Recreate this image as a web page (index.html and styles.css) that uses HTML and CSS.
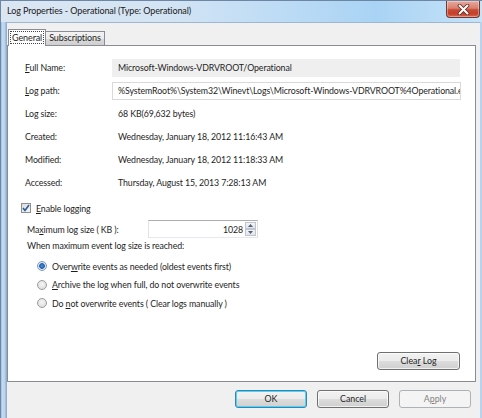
FILE: index.html
```html
<!DOCTYPE html>
<html>
<head>
<meta charset="utf-8">
<link rel="stylesheet" href="styles.css">
</head>
<body>
<div class="window">
  <header class="titlebar">
    <span class="title">Log Properties - Operational (Type: Operational)</span>
    <span class="close">
      <svg width="13" height="11" viewBox="0 0 13 11">
        <path d="M2.5 1.5 L10.5 9.5 M10.5 1.5 L2.5 9.5" stroke="#5a2a24" stroke-width="3.6" stroke-linecap="round"/>
        <path d="M2.5 1.5 L10.5 9.5 M10.5 1.5 L2.5 9.5" stroke="#ffffff" stroke-width="2" stroke-linecap="round"/>
      </svg>
    </span>
  </header>
  <div class="client">
    <div class="tabs">
      <div class="tab active"><span class="focus">General</span></div>
      <div class="tab">Subscriptions</div>
    </div>
    <section class="panel">
      <div class="props">
        <div class="lbl"><u>F</u>ull Name:</div>
        <div class="val ro">Microsoft-Windows-VDRVROOT/Operational</div>
        <div class="lbl"><u>L</u>og path:</div>
        <div class="val box">%SystemRoot%\System32\Winevt\Logs\Microsoft-Windows-VDRVROOT%4Operational.evtx</div>
        <div class="lbl">Log size:</div>
        <div class="val">68 KB(69,632 bytes)</div>
        <div class="lbl">Created:</div>
        <div class="val">Wednesday, January 18, 2012 11:16:43 AM</div>
        <div class="lbl">Modified:</div>
        <div class="val">Wednesday, January 18, 2012 11:18:33 AM</div>
        <div class="lbl">Accessed:</div>
        <div class="val">Thursday, August 15, 2013 7:28:13 AM</div>
      </div>

      <div class="check-row">
        <span class="checkbox">
          <svg width="8" height="8" viewBox="0 0 8 8"><path d="M1 4 L3 6.5 L7 1" fill="none" stroke="#2b5d99" stroke-width="1.6"/></svg>
        </span>
        <span><u>E</u>nable logging</span>
      </div>

      <div class="size-row">
        <span class="size-label">Ma<u>x</u>imum log size ( KB ):</span>
        <span class="spin">
          <span class="spin-val">1028</span>
          <span class="spin-btns">
            <span class="spin-btn"><svg width="5" height="3" viewBox="0 0 5 3"><path d="M0 3 L2.5 0 L5 3Z" fill="#4d6185"/></svg></span>
            <span class="spin-btn"><svg width="5" height="3" viewBox="0 0 5 3"><path d="M0 0 L2.5 3 L5 0Z" fill="#4d6185"/></svg></span>
          </span>
        </span>
      </div>

      <div class="when">When maximum event log size is reached:</div>

      <div class="radios">
        <div class="radio-row"><span class="radio on"></span><span>Over<u>w</u>rite events as needed (oldest events first)</span></div>
        <div class="radio-row"><span class="radio"></span><span><u>A</u>rchive the log when full, do not overwrite events</span></div>
        <div class="radio-row"><span class="radio"></span><span>Do <u>n</u>ot overwrite events ( Clear logs manually )</span></div>
      </div>

      <div class="clear-row">
        <button class="btn clear">Clea<u>r</u> Log</button>
      </div>
    </section>
    <div class="footer">
      <button class="btn default">OK</button>
      <button class="btn">Cancel</button>
      <button class="btn disabled">A<u>p</u>ply</button>
    </div>
  </div>
</div>
</body>
</html>
```

FILE: styles.css
```css
* { box-sizing: border-box; }
html, body { margin: 0; padding: 0; }
body {
  width: 482px;
  height: 418px;
  overflow: hidden;
  font-family: "Lato", "Noto Sans", sans-serif;
  font-size: 8.8px;
  letter-spacing: -0.1px;
  color: #1e1e1e;
}
u { text-decoration-thickness: 1px; text-underline-offset: 1px; }

.window {
  width: 482px;
  height: 418px;
  display: flex;
  flex-direction: column;
  background: linear-gradient(90deg, #8fb2d6 0px, #c4dcf2 1px, #b7d3ee 4px, #8eaed0 5px, #b7d3ee 6px);
  border-top: 1px solid #6c86a4;
  border-left: 1px solid #6c86a4;
}

.titlebar {
  height: 21px;
  flex: none;
  display: flex;
  align-items: flex-start;
  padding-left: 6px;
  background: linear-gradient(90deg, #dbe6f2 0%, #d3e4f4 35%, #b9daf5 62%, #a9d3f4 78%, #c6e3f8 100%);
}
.title {
  margin-top: 4px;
  font-size: 9px;
  color: #1a1a1a;
  line-height: 12px;
}
.close {
  margin-left: auto;
  margin-right: 2px;
  width: 34px;
  height: 17px;
  display: flex;
  align-items: center;
  justify-content: center;
  border: 1px solid #6e3a33;
  border-top: none;
  border-radius: 0 0 4px 4px;
  background: linear-gradient(180deg, #e9a99c 0%, #d9806f 45%, #c84a35 55%, #c6402b 80%, #d66b52 100%);
  box-shadow: inset 0 0 0 1px rgba(255,255,255,0.35);
}

.client {
  flex: 1;
  margin-left: 5px;
  margin-right: 2px;
  background: #f0f0f0;
  border-top: 1px solid #9fb6cf;
  border-left: 1px solid #94aeca;
  display: flex;
  flex-direction: column;
  padding-top: 6px;
}

.tabs {
  display: flex;
  align-items: flex-end;
  padding-left: 1px;
  height: 16px;
  position: relative;
  z-index: 1;
}
.tab {
  height: 14px;
  padding: 0 3px;
  border: 1px solid #898c95;
  border-bottom: none;
  background: linear-gradient(180deg, #f3f3f3 0%, #ebebeb 50%, #dcdcdc 51%, #cfcfcf 100%);
  line-height: 12px;
  font-size: 9px;
  margin-left: -1px;
}
.tab.active {
  background: #ffffff;
  padding: 1px 1px 0 1px;
  margin-left: 0;
  margin-bottom: -1px;
  height: 17px;
  z-index: 2;
  position: relative;
}
.focus {
  display: inline-block;
  border: 1px dotted #444;
  padding: 0 1px;
  line-height: 11px;
}

.panel {
  margin: 0 4px 0 0;
  height: 337px;
  background: #ffffff;
  border: 1px solid #898c95;
  padding: 10px 15px 11px 17px;
  display: flex;
  flex-direction: column;
}

.props {
  display: grid;
  grid-template-columns: 87px 1fr;
  grid-auto-rows: 23px;
  align-items: center;
}
.lbl { line-height: 12px; }
.val {
  line-height: 12px;
  padding-left: 6px;
  white-space: nowrap;
  overflow: hidden;
}
.val.ro {
  background: #efefef;
  height: 18px;
  line-height: 18px;
}
.val.box {
  background: #ffffff;
  border: 1px solid #d9d9d9;
  height: 18px;
  line-height: 16px;
  padding-left: 5px;
  margin-right: -1px;
  text-overflow: clip;
}

.check-row {
  margin-top: 8px;
  margin-left: -4px;
  display: flex;
  align-items: center;
  height: 12px;
  gap: 5px;
}
.checkbox {
  width: 10px;
  height: 10px;
  border: 1px solid #8e8f8f;
  background: linear-gradient(135deg, #dcdcdc, #f6f6f6);
  display: flex;
  align-items: center;
  justify-content: center;
}

.size-row {
  margin-top: 6px;
  margin-left: 2px;
  display: flex;
  align-items: center;
  height: 18px;
}
.size-label { width: 121px; }
.spin {
  width: 110px;
  height: 18px;
  border: 1px solid #abadb3;
  border-left-color: #e2e3ea;
  border-right-color: #dbdfe6;
  border-bottom-color: #e3e9ef;
  display: flex;
  align-items: center;
  background: #fff;
}
.spin-val {
  flex: 1;
  text-align: right;
  padding-right: 2px;
}
.spin-btns {
  display: flex;
  flex-direction: column;
  width: 12px;
  height: 16px;
  padding: 1px 1px 1px 0;
}
.spin-btn {
  flex: 1;
  display: flex;
  align-items: center;
  justify-content: center;
  border: 1px solid #c2c6cc;
  background: linear-gradient(180deg, #f4f4f4, #e2e4e8);
}

.when {
  margin-top: 2px;
  margin-left: 2px;
  line-height: 12px;
  height: 13px;
}

.radios {
  margin-top: 7px;
  margin-left: 12px;
  display: flex;
  flex-direction: column;
  gap: 6.5px;
}
.radio-row {
  display: flex;
  align-items: center;
  gap: 5px;
  height: 12px;
}
.radio {
  width: 10px;
  height: 10px;
  border-radius: 50%;
  border: 1px solid #9c9c9c;
  background: radial-gradient(circle at 50% 40%, #f6f6f6 0%, #d6d6d6 100%);
}
.radio.on {
  background: radial-gradient(circle at 50% 50%, #4f8fd6 0px, #1d5fb4 2.5px, #dfe9f4 3.2px, #cfd8e3 100%);
  border-color: #7f9db9;
}

.clear-row {
  margin-top: auto;
  display: flex;
  justify-content: flex-end;
}

.btn {
  font-family: inherit;
  font-size: 8.8px;
  color: #1e1e1e;
  height: 18px;
  width: 72px;
  padding: 0;
  border: 1px solid #707070;
  border-radius: 3px;
  background: linear-gradient(180deg, #f2f2f2 0%, #ebebeb 49%, #dddddd 50%, #cfcfcf 100%);
  box-shadow: inset 0 0 0 1px rgba(255,255,255,0.7);
  line-height: 14px;
}
.btn.clear { width: 83px; }
.btn.default {
  border-color: #3c7fb1;
  box-shadow: inset 0 0 0 1px #48d7f7;
}
.btn.disabled {
  border-color: #adb2b5;
  background: #f4f4f4;
  color: #838383;
  box-shadow: none;
}

.footer {
  display: flex;
  justify-content: flex-end;
  gap: 10px;
  padding: 8px 9px 0 0;
}
```
